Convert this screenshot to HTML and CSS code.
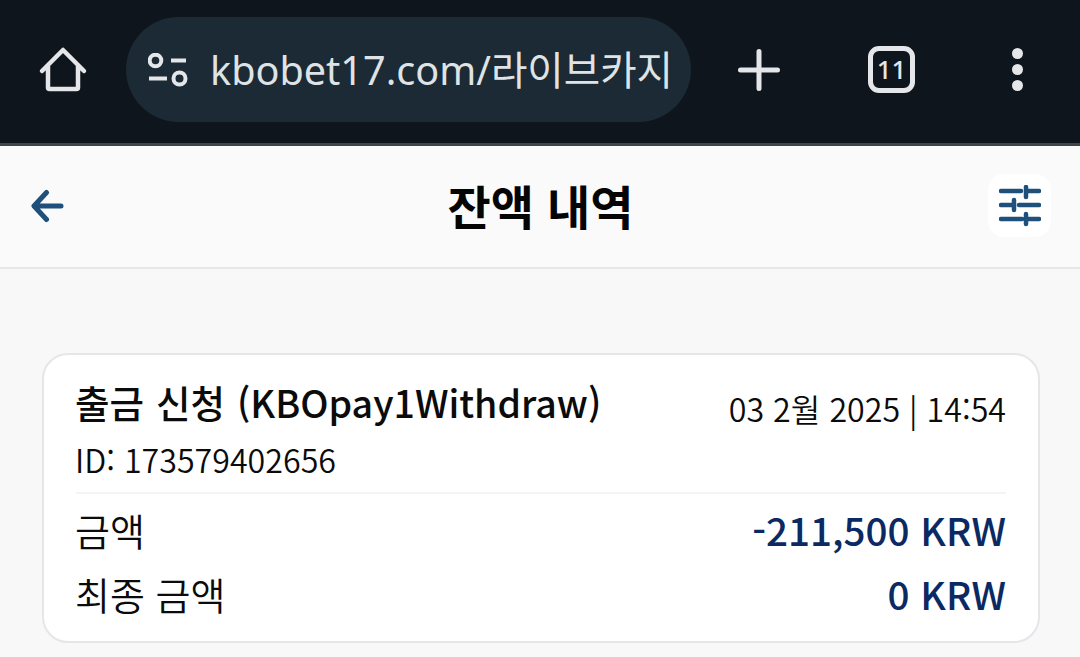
FILE: index.html
```html
<!DOCTYPE html>
<html lang="ko">
<head>
<meta charset="utf-8">
<title>잔액 내역</title>
<link rel="stylesheet" href="styles.css">
</head>
<body>
<div class="toolbar">
  <svg class="home" width="50" height="50" viewBox="0 0 50 50"><path d="M4 26 25 5l21 21M10 21v21.500q0 1.500 1.500 1.500h27q1.500 0 1.500-1.500V21" fill="none" stroke="#e4e6e9" stroke-width="4.500" stroke-linecap="round" stroke-linejoin="round"/></svg>
  <div class="pill">
    <svg class="tune" width="40" height="34" viewBox="0 0 40 34"><g fill="none" stroke="#e4e6e9" stroke-width="4"><circle cx="7.500" cy="7.500" r="5.800"/><circle cx="31.500" cy="25.500" r="6"/><path d="M23 7.500h15M1 25.500h18"/></g></svg>
    <span class="url">kbobet17.com/라이브카지</span>
  </div>
  <svg class="plus" width="44" height="44" viewBox="0 0 44 44"><path d="M22 3.500v37M3.500 22h37" stroke="#e4e6e9" stroke-width="5" stroke-linecap="round"/></svg>
  <div class="tabs">11</div>
  <div class="dots"><i></i><i></i><i></i></div>
</div>
<header class="head">
  <svg class="back" width="33" height="34" viewBox="0 0 33 34"><path d="M15.500 3.500 3 17l12.500 13.500M4 17h26" fill="none" stroke="#1f4f7b" stroke-width="5" stroke-linecap="round" stroke-linejoin="round"/></svg>
  <h1 class="title">잔액 내역</h1>
  <div class="filter">
    <svg width="42" height="42" viewBox="0 0 42 42"><path d="M2 6h20M27 6h13M27 2v10M2 20h13M20 20h20M15 15v10M2 34h21M27 34h13M27 29v10" fill="none" stroke="#1f4f7b" stroke-width="4.500" stroke-linecap="round"/></svg>
  </div>
</header>
<main class="content">
  <section class="card">
    <div class="top">
      <div>
        <div class="name">출금 신청 (KBOpay1Withdraw)</div>
        <div class="id">ID: 173579402656</div>
      </div>
      <div class="date">03 2월 2025 | 14:54</div>
    </div>
    <div class="row first"><span>금액</span><b>-211,500 KRW</b></div>
    <div class="row"><span>최종 금액</span><b>0 KRW</b></div>
  </section>
</main>
</body>
</html>
```
FILE: styles.css
```css
* { box-sizing: border-box; }
html, body { margin: 0; height: 100%; overflow: hidden; }
body { background: #f8f8f8; font-family: "Noto Sans CJK KR", "Noto Sans", sans-serif; color: #0b0b0b; }
.toolbar { height: 146px; background: #0f151c; border-bottom: 3px solid #3f454c; display: flex; align-items: center; padding: 0 0 4px 38px; }
.home { flex: none; margin-right: 38px; }
.pill { width: 565px; height: 105px; border-radius: 53px; background: #1b2a34; display: flex; align-items: center; padding-left: 22px; margin-right: 46px; flex: none; overflow: hidden; }
.tune { flex: none; margin-right: 22px; }
.url { font-family: "Noto Sans", "Noto Sans CJK KR", sans-serif; font-size: 39.600px; color: #dfe3e6; white-space: nowrap; padding-bottom: 3px; }
.plus { flex: none; margin-right: 87px; }
.tabs { width: 47px; height: 47px; border: 5px solid #e4e6e9; border-radius: 11px; color: #e4e6e9; font: 500 26px/36px "Noto Sans", sans-serif; text-align: center; margin-right: 97px; flex: none; }
.dots { display: flex; flex-direction: column; gap: 5px; }
.dots i { display: block; width: 11px; height: 11px; border-radius: 50%; background: #e4e6e9; }
.head { height: 123px; border-bottom: 2px solid #e4e6e9; background: #fafafa; display: flex; align-items: center; justify-content: space-between; padding: 0 29px 2px 31px; position: relative; }
.title { margin: 0; padding: 0 0 2px 1px; font-size: 47px; font-weight: 700; position: absolute; left: 0; right: 0; text-align: center; line-height: 1; color: #050505; }
.filter { width: 63px; height: 63px; border-radius: 16px; background: #fff; display: flex; align-items: center; justify-content: center; position: relative; }
.back { position: relative; }
.content { padding: 84px 40px 0 42px; }
.card { height: 290px; background: #fff; border: 2px solid #e4e6e9; border-radius: 26px; padding: 17px 32px 0; }
.top { display: flex; justify-content: space-between; height: 122px; border-bottom: 2px solid #f3f4f5; }
.name { font-size: 37.500px; font-weight: 500; line-height: 60px; word-spacing: 1.500px; margin-left: -1px; }
.id { font-size: 32.200px; font-weight: 350; line-height: 44px; margin-top: 5px; margin-left: -1px; }
.date { font-size: 32.200px; font-weight: 350; line-height: 44px; padding-top: 14px; }
.row { display: flex; justify-content: space-between; align-items: center; font-size: 38px; font-weight: 350; height: 64px; }
.row span { margin-left: -1px; padding-top: 1px; }
.row.first { margin-top: 3px; }
.row b { font-weight: 500; color: #0b2a63; font-size: 38.600px; }
```
